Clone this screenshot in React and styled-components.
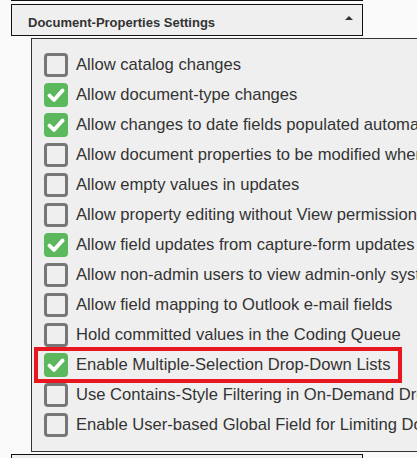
import React from "react";
import styled, { createGlobalStyle } from "styled-components";

const Global = createGlobalStyle`
  html, body { margin: 0; padding: 0; background: #fafafa; overflow: hidden; }
  body { font-family: "Liberation Sans", Arial, sans-serif; color: #333; }
`;

const Page = styled.div`
  width: 417px;
  height: 458px;
  overflow: hidden;
  padding-left: 11px;
  box-sizing: border-box;
`;

const PrevSection = styled.div`
  width: 352px;
  height: 1px;
  box-sizing: border-box;
  border: 1px solid #111;
  border-top: none;
  background: #efefef;
  margin-bottom: 3px;
`;

const Header = styled.div`
  width: 352px;
  height: 32px;
  box-sizing: border-box;
  border: 1px solid #111;
  background: #efefef;
  display: flex;
  align-items: center;
  justify-content: space-between;
  padding: 4px 9px 0 16px;
`;

const Title = styled.span`
  font-weight: bold;
  font-size: 13px;
  color: #333;
`;

const Caret = styled.span`
  width: 0;
  height: 0;
  border-left: 4px solid transparent;
  border-right: 4px solid transparent;
  border-bottom: 4px solid #333;
  margin-top: -8px;
`;

const Panel = styled.div`
  margin: 2px 0 2px 20px;
  width: 420px;
  box-sizing: border-box;
  border: 1px solid #333;
  border-right: none;
  background: #efefef;
  padding: 11px 0 11px 12px;
  display: flex;
  flex-direction: column;
`;

const Row = styled.label`
  position: relative;
  height: 30px;
  display: flex;
  align-items: center;
  gap: 8px;
  white-space: nowrap;
  font-size: 16.6px;
  color: #333;
  &::after {
    content: "";
    display: ${(p) => (p.$highlight ? "block" : "none")};
    position: absolute;
    left: -10px;
    top: -3px;
    width: 368px;
    height: 36px;
    box-sizing: border-box;
    border: 4px solid #e8161e;
  }
`;

const Box = styled.span`
  width: 24px;
  height: 24px;
  flex-shrink: 0;
  box-sizing: border-box;
  border-radius: 4px;
  display: flex;
  align-items: center;
  justify-content: center;
  background: ${(p) => (p.$checked ? "#5cb85c" : "transparent")};
  border: ${(p) => (p.$checked ? "none" : "3px solid #777")};
`;

const Footer = styled.div`
  width: 352px;
  height: 10px;
  box-sizing: border-box;
  border: 1px solid #111;
  border-bottom: none;
  background: #efefef;
`;

const Check = () => (
  <svg width="18" height="18" viewBox="0 0 18 18">
    <path
      d="M2.5 9.5 L7 14 L15.5 4.5"
      fill="none"
      stroke="#fff"
      strokeWidth="3.8"
      strokeLinecap="round"
      strokeLinejoin="round"
    />
  </svg>
);

const items = [
  ["Allow catalog changes", false],
  ["Allow document-type changes", true],
  ["Allow changes to date fields populated automatically", true],
  ["Allow document properties to be modified when", false],
  ["Allow empty values in updates", false],
  ["Allow property editing without View permissions", false],
  ["Allow field updates from capture-form updates", true],
  ["Allow non-admin users to view admin-only system", false],
  ["Allow field mapping to Outlook e-mail fields", false],
  ["Hold committed values in the Coding Queue", false],
  ["Enable Multiple-Selection Drop-Down Lists", true, true],
  ["Use Contains-Style Filtering in On-Demand Drop-Downs", false],
  ["Enable User-based Global Field for Limiting Documents", false],
];

export default function App() {
  return (
    <>
      <Global />
      <Page>
        <PrevSection />
        <Header>
          <Title>Document-Properties Settings</Title>
          <Caret />
        </Header>
        <Panel>
          {items.map(([text, checked, hl]) => (
            <Row key={text} $highlight={hl}>
              <Box $checked={checked}>{checked && <Check />}</Box>
              <span>{text}</span>
            </Row>
          ))}
        </Panel>
        <Footer />
      </Page>
    </>
  );
}
